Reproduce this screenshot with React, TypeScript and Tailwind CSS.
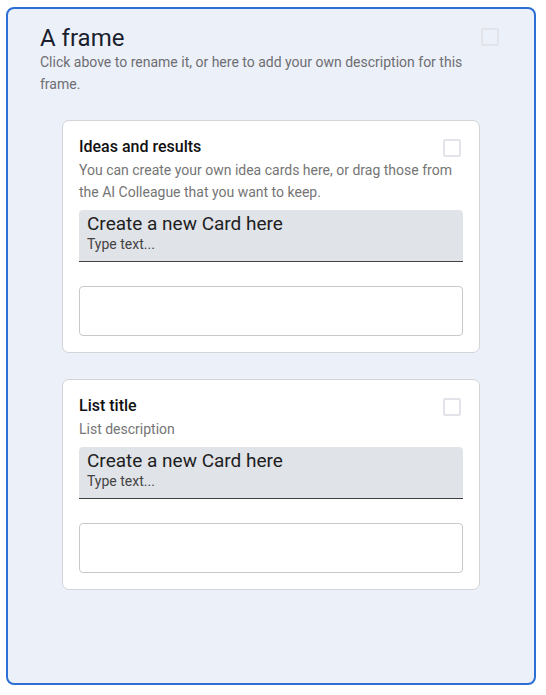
import React from "react";

function Box({ className = "" }: { className?: string }) {
  return <div className={`w-[18px] h-[18px] shrink-0 rounded-[2px] border-2 border-[#e2e4ea] ${className}`} />;
}

function ListCard({ title, desc }: { title: string; desc: string }) {
  return (
    <div className="relative w-[418px] mx-auto rounded-[7px] border border-[#d3d4d8] bg-white px-4 pt-[14px] pb-[16px]">
      <Box className="absolute top-[18px] right-[18px]" />
      <div className="text-[16px] leading-[24px] font-medium text-[#111]">{title}</div>
      <div className="text-[14px] leading-[22px] text-[#757575]">{desc}</div>
      <div className="mt-[7px] h-[52px] rounded-t-[4px] bg-[#e0e3e8] border-b border-[#404040] px-2 pt-[3px]">
        <div className="text-[19px] leading-[22px] text-[#1e1e1e]">Create a new Card here</div>
        <div className="text-[14px] leading-[18px] text-[#444]">Type text...</div>
      </div>
      <div className="mt-6 h-[50px] rounded-[4px] border border-[#c9c9cc] bg-white" />
    </div>
  );
}

export default function App() {
  return (
    <div className="w-[546px] h-[695px] bg-white pt-[7px] pl-[6px]" style={{ fontFamily: "Roboto, 'Noto Sans', sans-serif" }}>
      <div className="w-[530px] h-[678px] rounded-[8px] border-2 border-[#2d6fd5] bg-[#ecf0f8]">
        <div className="flex items-start justify-between pl-8 pr-[35px] pt-[16px]">
          <div className="flex-1 pr-4">
            <div className="text-[24px] leading-[26px] text-[#1b1f2e]">A frame</div>
            <div className="text-[14px] leading-[22px] text-[#6e6e73]">
              Click above to rename it, or here to add your own description for this frame.
            </div>
          </div>
          <Box className="mt-[3px]" />
        </div>
        <div className="mt-[25px] flex flex-col gap-[26px]">
          <ListCard
            title="Ideas and results"
            desc="You can create your own idea cards here, or drag those from the AI Colleague that you want to keep."
          />
          <ListCard title="List title" desc="List description" />
        </div>
      </div>
    </div>
  );
}
